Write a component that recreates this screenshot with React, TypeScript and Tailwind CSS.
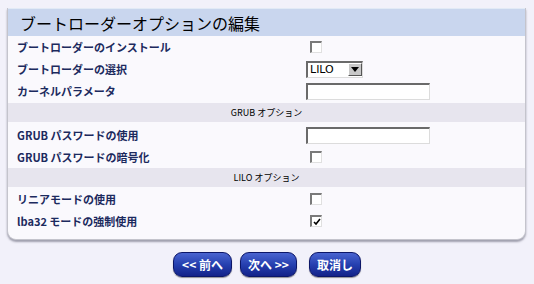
import React from "react";

const jp = { fontFamily: '"Noto Sans CJK JP", "Noto Sans", sans-serif' };

function Check({ checked = false }: { checked?: boolean }) {
  return (
    <div className="ml-[4px] w-[12px] h-[12px] bg-white border-t-[2px] border-l-[2px] border-t-[#7a7a7a] border-l-[#7a7a7a] border-b border-r border-b-[#e0e0e0] border-r-[#e0e0e0] relative">
      {checked && (
        <svg className="absolute left-[1px] top-[1px]" width="8" height="8" viewBox="0 0 8 8">
          <path d="M1 4 L3 6 L7 1" stroke="#000" strokeWidth="1.6" fill="none" />
        </svg>
      )}
    </div>
  );
}

function TextBox() {
  return (
    <div className="w-[124px] h-[17px] bg-white border-t-[2px] border-l-[2px] border-t-[#6a6a6a] border-l-[#6a6a6a] border-b border-r border-b-[#dcdcdc] border-r-[#dcdcdc]" />
  );
}

function Select() {
  return (
    <div className="w-[57px] h-[17px] bg-white border-t-[2px] border-l-[2px] border-t-[#6a6a6a] border-l-[#6a6a6a] border-b border-r border-b-[#dcdcdc] border-r-[#dcdcdc] flex items-center">
      <span className="flex-1 pl-[2px] text-[11px] leading-none text-black" style={{ fontFamily: '"DejaVu Sans", sans-serif' }}>
        LILO
      </span>
      <div className="w-[14px] h-[13px] bg-[#c8c8c8] border-t border-l border-t-white border-l-white border-b border-r border-b-[#555] border-r-[#555] flex items-center justify-center">
        <svg width="8" height="5" viewBox="0 0 8 5">
          <path d="M0 0 H8 L4 5 Z" fill="#000" />
        </svg>
      </div>
    </div>
  );
}

function Row({ label, children }: { label: string; children: React.ReactNode }) {
  return (
    <div className="h-[22px] flex items-center">
      <div className="w-[298px] pl-[9px] text-[11px] font-bold text-[#1c2a5e] leading-none" style={jp}>
        {label}
      </div>
      <div className="flex items-center">{children}</div>
    </div>
  );
}

function Band({ label }: { label: string }) {
  return (
    <div className="h-[19px] bg-[#e7e5ee] flex items-center justify-center text-[9px] text-black leading-none" style={jp}>
      {label}
    </div>
  );
}

function Btn({ label, w }: { label: string; w: string }) {
  return (
    <div
      className={`${w} h-[25px] rounded-[9px] bg-gradient-to-b from-[#4a64d0] via-[#2640b0] to-[#14228a] border border-[#0c1668] shadow-[0_1px_1px_rgba(0,0,0,0.4)] flex items-center justify-center text-white text-[12px] font-bold leading-none`}
      style={jp}
    >
      {label}
    </div>
  );
}

export default function App() {
  return (
    <div className="w-[534px] h-[284px] bg-[#f2f1fa] pt-[8px] overflow-hidden">
      <div className="ml-[7px] w-[519px] bg-[#faf9fd] border border-[#c4c4cc] border-t-0 rounded-b-[9px] shadow-[0_2px_2px_rgba(80,80,100,0.5)] pb-[7px]">
        <div className="h-[28px] bg-[#c9d6ee] border-t border-[#e2eaf6] flex items-center pl-[12px]">
          <span className="text-[16px] text-black leading-none" style={jp}>
            ブートローダーオプションの編集
          </span>
        </div>
        <Row label="ブートローダーのインストール">
          <Check />
        </Row>
        <Row label="ブートローダーの選択">
          <Select />
        </Row>
        <Row label="カーネルパラメータ">
          <TextBox />
        </Row>
        <div className="mt-[1px]">
          <Band label="GRUB オプション" />
        </div>
        <div className="mt-[2px]">
          <Row label="GRUB パスワードの使用">
            <TextBox />
          </Row>
          <Row label="GRUB パスワードの暗号化">
            <Check />
          </Row>
        </div>
        <Band label="LILO オプション" />
        <div className="mt-[1px]">
          <Row label="リニアモードの使用">
            <Check />
          </Row>
          <Row label="lba32 モードの強制使用">
            <Check checked />
          </Row>
        </div>
      </div>
      <div className="mt-[12px] flex justify-center">
        <Btn label="<< 前へ" w="w-[59px]" />
        <div className="w-[8px]" />
        <Btn label="次へ >>" w="w-[57px]" />
        <div className="w-[12px]" />
        <Btn label="取消し" w="w-[52px]" />
      </div>
    </div>
  );
}
